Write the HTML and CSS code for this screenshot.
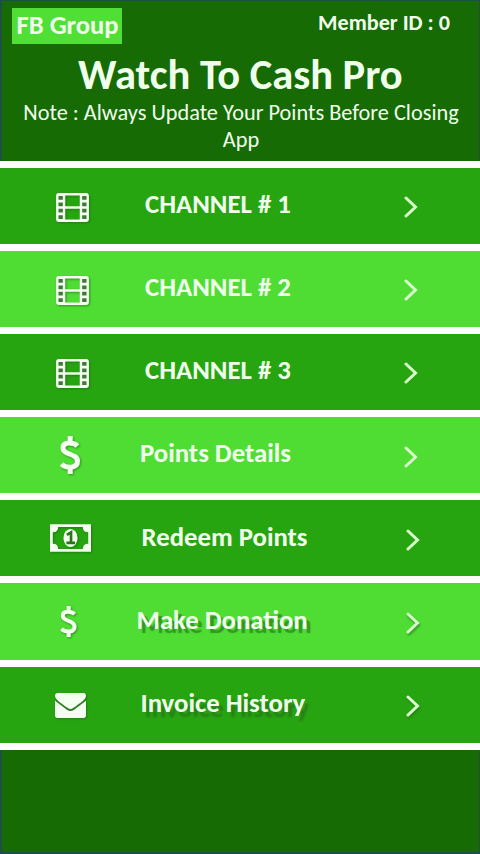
FILE: index.html
```html
<!DOCTYPE html>
<html lang="en">
<head>
<meta charset="utf-8">
<title>Watch To Cash Pro</title>
<link rel="stylesheet" href="styles.css">
</head>
<body>
<svg class="defs" aria-hidden="true">
  <symbol id="film" viewBox="0 0 34 30"><path fill="#41783a" d="M2 2H8V28H2ZM26 2H32V28H26Z"/><path fill="currentColor" fill-rule="evenodd" d="M3 0H31Q34 0 34 3V27Q34 30 31 30H3Q0 30 0 27V3Q0 0 3 0ZM2.500 3V7H7V3ZM2.500 9.700V13.700H7V9.700ZM2.500 16.300V20.300H7V16.300ZM2.500 23V27H7V23ZM27 3V7H31.500V3ZM27 9.700V13.700H31.500V9.700ZM27 16.300V20.300H31.500V16.300ZM27 23V27H31.500V23ZM9.500 2.500V13.700H24.500V2.500ZM9.500 16.300V27.500H24.500V16.300Z"/></symbol>
  <symbol id="dollar" viewBox="0 0 20 38"><path fill="none" stroke="currentColor" stroke-width="5" d="M17.500 10C14 6.500 3 5 3 12C3 19.500 17.500 17 17.500 25C17.500 33 6 32.500 1.500 28M10.200 0V7M10.200 31V38"/></symbol>
  <symbol id="bill" viewBox="0 0 40 27"><path fill="currentColor" fill-rule="evenodd" d="M0 0H40V27H0ZM8 2.700Q8 8 2.700 8V19Q8 19 8 24.300H32Q32 19 37.300 19V8Q32 8 32 2.700Z"/><ellipse cx="20" cy="13.500" rx="6.900" ry="8.800" fill="currentColor"/><path fill="none" stroke="#27741a" stroke-width="2.600" d="M16.500 10.500L20.500 8V18M16 18.200H24.500"/></symbol>
  <symbol id="mail" viewBox="0 0 30 24"><path fill="#327d28" d="M1 3L15 15L29 3V9L15 19L1 9Z"/><path fill="currentColor" d="M2.500 0H27.500Q30 0 30 2.500C30 6 25 9 17.500 14.500Q15 16.300 12.500 14.500C5 9 0 6 0 2.500Q0 0 2.500 0ZM0 7.500L11.500 16Q15 18.500 18.500 16L30 7.500V21.500Q30 24 27.500 24H2.500Q0 24 0 21.500Z"/></symbol>
  <symbol id="chevron" viewBox="0 0 14 22"><path fill="none" stroke="currentColor" stroke-width="3" stroke-linecap="round" d="M2 2L11.500 11L2 20"/></symbol>
</svg>
<div class="app">
  <header class="header">
    <div class="topbar">
      <a class="group">FB Group</a>
      <span class="member">Member ID : 0</span>
    </div>
    <h1 class="title">Watch To Cash Pro</h1>
    <p class="note">Note : Always Update Your Points Before Closing App</p>
  </header>
  <nav class="menu">
    <a class="row"><svg class="icon film"><use href="#film"/></svg><span class="label channel">CHANNEL # 1</span><svg class="chevron"><use href="#chevron"/></svg></a>
    <a class="row light"><svg class="icon film"><use href="#film"/></svg><span class="label channel">CHANNEL # 2</span><svg class="chevron"><use href="#chevron"/></svg></a>
    <a class="row"><svg class="icon film"><use href="#film"/></svg><span class="label channel">CHANNEL # 3</span><svg class="chevron"><use href="#chevron"/></svg></a>
    <a class="row light"><svg class="icon dollar"><use href="#dollar"/></svg><span class="label points">Points Details</span><svg class="chevron"><use href="#chevron"/></svg></a>
    <a class="row"><svg class="icon bill"><use href="#bill"/></svg><span class="label redeem">Redeem Points</span><svg class="chevron inset"><use href="#chevron"/></svg></a>
    <a class="row light"><svg class="icon dollar small"><use href="#dollar"/></svg><span class="label donate">Make Donation</span><svg class="chevron inset shade"><use href="#chevron"/></svg></a>
    <a class="row"><svg class="icon mail"><use href="#mail"/></svg><span class="label invoice">Invoice History</span><svg class="chevron inset shade"><use href="#chevron"/></svg></a>
  </nav>
  <footer class="footer"></footer>
</div>
</body>
</html>
```
FILE: styles.css
```css
* { box-sizing: border-box; }
body { margin: 0; background: #176b05; color: #f0ffec; font-family: Carlito, Lato, "Liberation Sans", sans-serif; }
.defs { position: absolute; width: 0; height: 0; }
.app { display: flex; flex-direction: column; height: 854px; overflow: hidden; }
.header { height: 160.500px; border: solid #1d5142; border-width: 1px 1px 0 2px; }
.topbar { display: flex; justify-content: space-between; height: 43px; padding: 7px 29px 0 10px; }
.group { width: 110px; height: 36px; padding-left: 4.500px; background: #4fdf35; font-size: 26.600px; font-weight: 700; line-height: 35px; white-space: nowrap; }
.member { font-size: 22.200px; font-weight: 700; line-height: 30px; white-space: nowrap; }
.title { margin: 0; padding-left: 76px; font-size: 42.500px; line-height: 62px; height: 53px; white-space: nowrap; }
.note { margin: 0; padding: 2px 16px 0 17px; font-size: 22.300px; line-height: 27px; height: 63px; text-align: center; }
.menu { padding: 7px 0 6.700px; background: #fff; display: grid; grid-auto-rows: 76.200px; gap: 7px; }
.row { display: grid; grid-template-columns: 140px 264px 1fr; align-items: center; background: #27a510; }
.light { background: #4fdd34; }
.footer { flex: 1; border: solid #1d5142; border-width: 0 1px 2px 2px; }
.icon { justify-self: start; color: #f4fff1; filter: drop-shadow(1px 1px 1px #17640d99); }
.film { width: 33px; height: 29px; margin: 3px 0 0 56px; }
.dollar { width: 20px; height: 38px; margin-left: 60px; }
.dollar.small { width: 17px; height: 31px; }
.bill { width: 41px; height: 28px; margin-left: 50px; }
.mail { width: 31px; height: 25px; margin: 2px 0 0 55px; }
.label { justify-self: start; font-size: 26.750px; font-weight: 700; line-height: 30px; margin-top: -3.500px; white-space: nowrap; }
.channel { margin-left: 5px; }
.redeem { margin-left: 1.500px; }
.donate { margin-left: -3.500px; text-shadow: 4px 4px 1px #28761fb0; }
.invoice { margin-left: 0.500px; text-shadow: 4px 5px 2px #286d1fb0; }
.chevron { width: 14px; height: 22px; color: #d8fccb; margin-top: 3px; }
.inset { margin-left: 2px; }
.shade { filter: drop-shadow(1px 2px 1px #27651f99); }
```
